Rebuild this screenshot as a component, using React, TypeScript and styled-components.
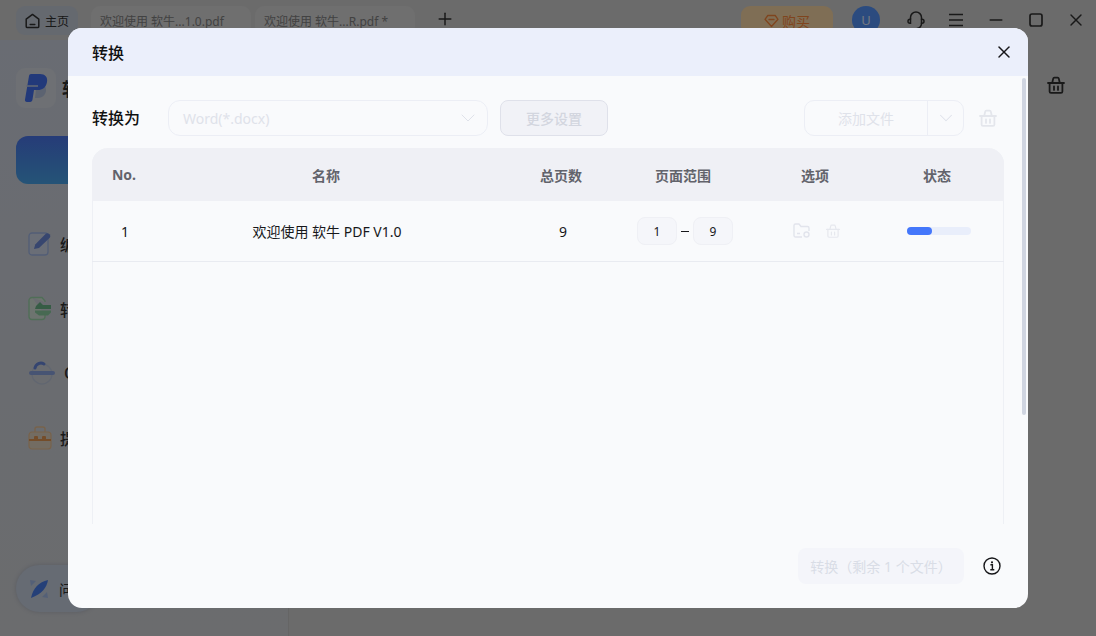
import styled, { createGlobalStyle } from "styled-components";
import { ChevronDown, Minus, Plus, X } from "lucide-react";

const HEAD_COLUMNS = "64px 340px 130px 114px 150px 94px";
const BODY_COLUMNS = "66px 338px 134px 110px 154px 90px";

const GlobalStyle = createGlobalStyle`
  html, body {
    margin: 0;
    padding: 0;
    width: 1096px;
    height: 636px;
    overflow: hidden;
    font-family: "Noto Sans", "Noto Sans CJK SC", sans-serif;
  }
  * { box-sizing: border-box; }
`;

const AppS = styled.div`
  position: relative;
  width: 1096px;
  height: 636px;
  display: flex;
  flex-direction: column;
  background: #d6d6d6;
  color: #333;
`;
const TitleBarS = styled.div`
  height: 40px;
  flex: none;
  display: flex;
  align-items: flex-start;
  padding: 6px 0 0 16px;
`;
const HomeTabS = styled.div`
  width: 62px;
  height: 29px;
  display: flex;
  align-items: center;
  justify-content: center;
  gap: 5px;
  font-size: 12px;
  border-radius: 9px;
  background: #cad2de;
`;
const DocTabS = styled.div`
  width: 160px;
  height: 29px;
  margin-left: ${(p: { $gap: number }) => p.$gap}px;
  padding-left: 9px;
  display: flex;
  align-items: center;
  font-size: 12px;
  color: #848484;
  border-radius: 9px;
  background: #dedede;
`;
const AddTabS = styled.div`
  margin: 3px auto 0 20px;
  display: flex;
`;
const BuyS = styled.div`
  width: 92px;
  height: 29px;
  display: flex;
  align-items: center;
  justify-content: center;
  gap: 3px;
  font-size: 14px;
  color: #ff8a3c;
  border-radius: 9px;
  background: #fedcaa;
`;
const AvatarS = styled.div`
  width: 28px;
  height: 28px;
  margin-left: 19px;
  border-radius: 50%;
  display: flex;
  align-items: center;
  justify-content: center;
  font-size: 13px;
  color: #e4ecff;
  background: #5696ff;
`;
const WindowIconsS = styled.div`
  display: flex;
  align-items: center;
  height: 28px;
  margin-left: 26px;
  padding-right: 10px;
  gap: 20px;
`;
const WindowIconS = styled.div`
  width: 20px;
  display: flex;
  justify-content: center;
`;
const MainS = styled.div`
  flex: 1;
  display: flex;
  min-height: 0;
`;
const SidebarS = styled.div`
  width: 289px;
  flex: none;
  padding: 28px 0 24px 16px;
  display: flex;
  flex-direction: column;
  border-right: 1px solid #cbcbcb;
  background: linear-gradient(180deg, #d3d9e6 0%, #d6d8dc 100%);
`;
const LogoTileS = styled.div`
  width: 40px;
  height: 40px;
  border-radius: 9px;
  background: #dce0e8;
  display: flex;
  align-items: center;
  justify-content: center;
`;
const BrandS = styled.div`
  display: flex;
  align-items: center;
  gap: 6px;
  font-size: 18px;
  font-weight: 700;
`;
const PrimaryNavS = styled.div`
  width: 256px;
  height: 48px;
  flex: none;
  margin-top: 28px;
  border-radius: 12px;
  background: linear-gradient(180deg, #4c78f0 0%, #4aa8ee 100%);
`;
const NavListS = styled.div`
  margin-top: 28px;
  display: flex;
  flex-direction: column;
`;
const NavItemS = styled.div`
  height: 64.5px;
  padding-left: 12px;
  display: flex;
  align-items: center;
  gap: 8px;
  font-size: 16px;
  font-weight: 500;
  & svg { flex: none; }
`;
const HelpPillS = styled.div`
  width: 84px;
  height: 47px;
  margin-top: auto;
  padding-left: 13px;
  display: flex;
  align-items: center;
  gap: 10px;
  font-size: 14px;
  border-radius: 24px;
  background: #ccd6e6;
  box-shadow: 0 0 4px rgba(80, 90, 120, 0.25);
`;
const ContentS = styled.div`
  flex: 1;
  display: flex;
  justify-content: flex-end;
  align-items: flex-start;
  padding: 35px 30px 0 0;
`;

const OverlayS = styled.div`
  position: absolute;
  inset: 0;
  display: flex;
  align-items: center;
  justify-content: center;
  background: rgba(0, 0, 0, 0.5);
`;
const DialogS = styled.div`
  position: relative;
  width: 960px;
  height: 580px;
  display: flex;
  flex-direction: column;
  border-radius: 14px;
  overflow: hidden;
  background: #f9fafc;
`;
const DialogHeaderS = styled.div`
  height: 48px;
  flex: none;
  padding: 0 14px 0 24px;
  display: flex;
  align-items: center;
  justify-content: space-between;
  font-size: 16px;
  font-weight: 500;
  color: #111;
  background: #ebeffb;
`;
const DialogBodyS = styled.div`
  flex: 1;
  min-height: 0;
  padding: 24px;
  display: flex;
  flex-direction: column;
`;
const ScrollThumbS = styled.div`
  position: absolute;
  top: 50px;
  right: 2px;
  width: 4px;
  height: 337px;
  border-radius: 2px;
  background: #d0d5e1;
`;
const ToolbarS = styled.div`
  height: 36px;
  flex: none;
  display: flex;
  align-items: center;
`;
const ToolbarLabelS = styled.div`
  width: 76px;
  flex: none;
  margin-top: -2px;
  font-size: 16px;
  font-weight: 500;
  color: #111;
`;
const SelectS = styled.div`
  width: 320px;
  height: 36px;
  padding: 0 7px 0 14px;
  display: flex;
  align-items: center;
  justify-content: space-between;
  font-size: 14px;
  color: #dfe2ea;
  border: 1px solid #eceef5;
  border-radius: 12px;
`;
const MoreButtonS = styled.div`
  width: 108px;
  height: 36px;
  margin-left: 12px;
  display: flex;
  align-items: center;
  justify-content: center;
  font-size: 14px;
  font-weight: 500;
  color: #d3d6df;
  border: 1px solid #dfe1ea;
  border-radius: 8px;
  background: #f1f2f7;
`;
const AddFileS = styled.div`
  width: 160px;
  height: 36px;
  margin-left: auto;
  display: flex;
  border: 1px solid #eceef5;
  border-radius: 10px;
`;
const AddFileLabelS = styled.div`
  flex: 1;
  display: flex;
  align-items: center;
  justify-content: center;
  font-size: 14px;
  color: #dfe2ea;
  border-right: 1px solid #eceef5;
`;
const AddFileCaretS = styled.div`
  width: 35px;
  display: flex;
  align-items: center;
  justify-content: center;
`;
const ClearButtonS = styled.div`
  width: 40px;
  display: flex;
  justify-content: flex-end;
  padding-right: 6px;
`;
const TableS = styled.div`
  flex: 1;
  min-height: 0;
  margin-top: 12px;
  display: flex;
  flex-direction: column;
  border: 1px solid #eef0f5;
  border-top: 0;
  border-bottom: 0;
  border-radius: 16px 16px 0 0;
`;
const HeadRowS = styled.div`
  height: 53px;
  flex: none;
  margin: 0 -1px;
  display: grid;
  grid-template-columns: ${HEAD_COLUMNS};
  align-items: center;
  text-align: center;
  font-size: 14px;
  font-weight: 700;
  color: #62636b;
  border-radius: 16px 16px 0 0;
  background: #eff0f5;
`;
const BodyRowS = styled.div`
  height: 61px;
  flex: none;
  margin: 0 -1px;
  display: grid;
  grid-template-columns: ${BODY_COLUMNS};
  align-items: center;
  justify-items: center;
  font-size: 14px;
  color: #17171a;
  border-bottom: 1px solid #e9ebf1;
`;
const RangeS = styled.div`
  display: flex;
  align-items: center;
  gap: 4px;
`;
const RangeDashS = styled.div`
  width: 8px;
  height: 1px;
  background: #17171a;
`;
const PageInputS = styled.div`
  width: 40px;
  height: 28px;
  display: flex;
  align-items: center;
  justify-content: center;
  font-size: 12px;
  border: 1px solid #eff0f5;
  border-radius: 8px;
  background: #f5f6fa;
`;
const OptionsS = styled.div`
  display: flex;
  align-items: center;
  gap: 14px;
`;
const ProgressS = styled.div`
  width: 64px;
  height: 8px;
  border-radius: 4px;
  background: #e9eefb;
`;
const ProgressFillS = styled.div`
  height: 100%;
  border-radius: 4px;
  background: #4477fb;
`;
const FooterS = styled.div`
  height: 36px;
  flex: none;
  margin-top: 24px;
  display: flex;
  align-items: center;
  justify-content: flex-end;
  gap: 19px;
  padding-right: 3px;
`;
const ConvertButtonS = styled.div`
  width: 166px;
  height: 36px;
  display: flex;
  align-items: center;
  justify-content: center;
  font-size: 14px;
  color: #d9dde6;
  border-radius: 8px;
  background: #f4f5fa;
`;

const BasketIcon = ({ size, color, sw = 1.8 }: { size: number; color: string; sw?: number }) => (
  <svg width={size} height={size} viewBox="0 0 20 20" fill="none" stroke={color} strokeWidth={sw} strokeLinejoin="round" strokeLinecap="round">
    <path d="M2 8h16" />
    <path d="M6.2 8l1-4.4a1.2 1.2 0 0 1 1.2-1h3.2a1.2 1.2 0 0 1 1.2 1l1 4.4" />
    <path d="M3.6 8v8.4a1.4 1.4 0 0 0 1.4 1.4h10a1.4 1.4 0 0 0 1.4-1.4V8" />
    <path d="M8 11.5v3.4M12 11.5v3.4" />
  </svg>
);

const HomeIcon = () => (
  <svg width="15" height="16" viewBox="0 0 15 16" fill="none" stroke="#333" strokeWidth="1.5" strokeLinejoin="round" strokeLinecap="round">
    <path d="M1.2 6.2 7.5 1.4l6.3 4.8v7.2a1.2 1.2 0 0 1-1.2 1.2H2.4a1.2 1.2 0 0 1-1.2-1.2z" />
    <path d="M5.2 11.6h4.6" />
  </svg>
);

const DiamondIcon = () => (
  <svg width="15" height="14" viewBox="0 0 15 14" fill="none" stroke="#ff8a3c" strokeWidth="1.3" strokeLinejoin="round" strokeLinecap="round">
    <path d="M3.8 1.5h7.400l2.800 3.800-6.500 7.200L1 5.300z" />
    <path d="M5 5.500h5" />
  </svg>
);

const HeadsetIcon = () => (
  <svg width="20" height="20" viewBox="0 0 20 20" fill="none" stroke="#333" strokeWidth="1.5" strokeLinecap="round">
    <path d="M4.500 9V7.500a5.500 5.500 0 0 1 11 0V13a5 5 0 0 1-4.500 5.500" />
    <path d="M4.500 9.200H4a2 2 0 0 0 0 4h.5z" />
    <path d="M15.500 9.200h.5a2 2 0 0 1 0 4h-.5" />
  </svg>
);

const MenuIcon = () => (
  <svg width="14" height="14" viewBox="0 0 14 14" stroke="#333" strokeWidth="1.5">
    <path d="M0 1.500h14M0 7h14M0 12.500h14" />
  </svg>
);

const MaxIcon = () => (
  <svg width="16" height="16" viewBox="0 0 16 16" fill="none" stroke="#333" strokeWidth="1.7">
    <rect x="2" y="2" width="12" height="12" rx="2" />
  </svg>
);

const LogoIcon = () => (
  <svg width="24" height="30" viewBox="0 0 24 30">
    <path d="M16 12c4 0 6 1 6 5s-3 8-8 8h-3l1-9z" fill="#b9c6e2" />
    <path d="M7 1h9c5 0 8 3 7 8-1 6-5 8-9 8h-4l-1.500 9.500c-.2 1.500-1 2.500-2.500 2.500H3c-1.500 0-2.300-1-2-2.500L5 3c.2-1.200 1-2 2-2z" fill="#4472f4" />
    <path d="M2 13h12" stroke="#c9d3e8" strokeWidth="1.500" />
  </svg>
);

const EditIcon = () => (
  <svg width="24" height="26" viewBox="0 0 24 26">
    <rect x="1" y="2" width="19" height="22" rx="3" fill="#d5dcee" stroke="#a4bbed" strokeWidth="1.300" />
    <path d="M6 18l1.200-4.500L17.500 3c1-1 2.800-1 4 .2s1 2.800 0 3.800L11 17z" fill="#6f8cde" />
  </svg>
);

const ConvertIcon = () => (
  <svg width="24" height="26" viewBox="0 0 24 26">
    <path d="M4 1.500h10l3 3.500v1M17 19v1.500a3 3 0 0 1-3 3H4a3 3 0 0 1-3-3v-16a3 3 0 0 1 3-3" fill="#dbe8df" stroke="#a0dcae" strokeWidth="1.400" />
    <path d="M8 10l4-4 3 3h8v4H7z" fill="#6cb98a" />
    <path d="M7 14.500h16v2l-3 3h-9l-4-3z" fill="#8fd3a4" />
  </svg>
);

const OcrIcon = () => (
  <svg width="28" height="28" viewBox="0 0 28 28" fill="none">
    <circle cx="14" cy="15" r="10" stroke="#c3cde0" strokeWidth="1.400" />
    <path d="M7 9a6 6 0 0 1 9-4" stroke="#6a8ae0" strokeWidth="3" strokeLinecap="round" />
    <rect x="1" y="12" width="26" height="4" rx="2" fill="#8fa8e6" />
  </svg>
);

const BagIcon = () => (
  <svg width="24" height="26" viewBox="0 0 24 26" fill="none">
    <path d="M7 7V4a2 2 0 0 1 2-2h6a2 2 0 0 1 2 2v3" stroke="#efc596" strokeWidth="1.400" />
    <rect x="1" y="7" width="22" height="17" rx="3" fill="#e6d8c4" stroke="#efc596" strokeWidth="1.200" />
    <path d="M1 14h22v2H1z" fill="#e89a55" />
    <rect x="6" y="11" width="4" height="5" rx="1" fill="#e89a55" />
    <rect x="14" y="11" width="4" height="5" rx="1" fill="#e89a55" />
  </svg>
);

const CompassIcon = () => (
  <svg width="20" height="20" viewBox="0 0 20 20">
    <path d="M19 1c-1 7-6 14-17 18C4 9 10 3 19 1z" fill="#4a80f0" />
    <path d="M1 1l6 1-5 5zM19 19l-6-1 5-5z" fill="#a9c0ee" />
  </svg>
);

const FolderIcon = () => (
  <svg width="18" height="16" viewBox="0 0 18 16" fill="none" stroke="#e2e4ec" strokeWidth="1.400" strokeLinejoin="round">
    <path d="M9 14H2.500A1.500 1.500 0 0 1 1 12.500v-10A1.500 1.500 0 0 1 2.500 1H6l2 2.500h6.500A1.500 1.500 0 0 1 16 5v3" />
    <path d="M4 10.500h3" />
    <circle cx="13.500" cy="11.500" r="2.500" />
  </svg>
);

const InfoIcon = () => (
  <svg width="18" height="18" viewBox="0 0 18 18" fill="none">
    <circle cx="9" cy="9" r="8" stroke="#17171a" strokeWidth="1.400" />
    <circle cx="9" cy="5.300" r="1.100" fill="#17171a" />
    <path d="M7.400 7.800H9.400V12.400M7.300 12.700h4" stroke="#17171a" strokeWidth="1.400" />
  </svg>
);

export default function App() {
  return (
    <AppS>
      <GlobalStyle />
      <TitleBarS>
        <HomeTabS>
          <HomeIcon />
          主页
        </HomeTabS>
        <DocTabS $gap={13}>欢迎使用 软牛...1.0.pdf</DocTabS>
        <DocTabS $gap={4}>欢迎使用 软牛...R.pdf *</DocTabS>
        <AddTabS>
          <Plus size={20} strokeWidth={1.8} />
        </AddTabS>
        <BuyS>
          <DiamondIcon />
          购买
        </BuyS>
        <AvatarS>U</AvatarS>
        <WindowIconsS>
          <WindowIconS>
            <HeadsetIcon />
          </WindowIconS>
          <WindowIconS>
            <MenuIcon />
          </WindowIconS>
          <WindowIconS>
            <Minus size={20} strokeWidth={1.7} />
          </WindowIconS>
          <WindowIconS>
            <MaxIcon />
          </WindowIconS>
          <WindowIconS>
            <X size={20} strokeWidth={1.7} />
          </WindowIconS>
        </WindowIconsS>
      </TitleBarS>
      <MainS>
        <SidebarS>
          <BrandS>
            <LogoTileS>
              <LogoIcon />
            </LogoTileS>
            软牛 PDF
          </BrandS>
          <PrimaryNavS />
          <NavListS>
            <NavItemS>
              <EditIcon />
              编辑
            </NavItemS>
            <NavItemS>
              <ConvertIcon />
              转换
            </NavItemS>
            <NavItemS>
              <OcrIcon />
              OCR
            </NavItemS>
            <NavItemS>
              <BagIcon />
              提取
            </NavItemS>
          </NavListS>
          <HelpPillS>
            <CompassIcon />
            问题
          </HelpPillS>
        </SidebarS>
        <ContentS>
          <BasketIcon size={20} color="#333" />
        </ContentS>
      </MainS>

      <OverlayS>
        <DialogS>
          <DialogHeaderS>
            转换
            <X size={20} strokeWidth={1.8} color="#17171a" />
          </DialogHeaderS>
          <ScrollThumbS />
          <DialogBodyS>
            <ToolbarS>
              <ToolbarLabelS>转换为</ToolbarLabelS>
              <SelectS>
                Word(*.docx)
                <ChevronDown size={24} strokeWidth={1} color="#dfe2ea" />
              </SelectS>
              <MoreButtonS>更多设置</MoreButtonS>
              <AddFileS>
                <AddFileLabelS>添加文件</AddFileLabelS>
                <AddFileCaretS>
                  <ChevronDown size={22} strokeWidth={1.1} color="#dfe2ea" />
                </AddFileCaretS>
              </AddFileS>
              <ClearButtonS>
                <BasketIcon size={20} color="#e4e6ec" />
              </ClearButtonS>
            </ToolbarS>
            <TableS>
              <HeadRowS>
                <span>No.</span>
                <span>名称</span>
                <span>总页数</span>
                <span>页面范围</span>
                <span>选项</span>
                <span>状态</span>
              </HeadRowS>
              <BodyRowS>
                <span>1</span>
                <span>欢迎使用 软牛 PDF V1.0</span>
                <span>9</span>
                <RangeS>
                  <PageInputS>1</PageInputS>
                  <RangeDashS />
                  <PageInputS>9</PageInputS>
                </RangeS>
                <OptionsS>
                  <FolderIcon />
                  <BasketIcon size={16} color="#e6e8ee" sw={1.5} />
                </OptionsS>
                <ProgressS>
                  <ProgressFillS style={{ width: `${(25 / 64) * 100}%` }} />
                </ProgressS>
              </BodyRowS>
            </TableS>
            <FooterS>
              <ConvertButtonS>转换（剩余 1 个文件）</ConvertButtonS>
              <InfoIcon />
            </FooterS>
          </DialogBodyS>
        </DialogS>
      </OverlayS>
    </AppS>
  );
}
